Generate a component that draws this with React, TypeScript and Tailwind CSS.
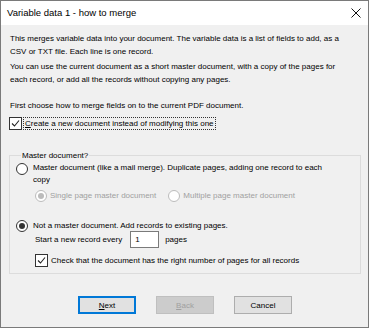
import React from 'react'

const Check = () => (
  <svg width="9" height="9" viewBox="0 0 9 9" className="block">
    <path d="M1 4.5 L3.5 7 L8 1.5" fill="none" stroke="#222" strokeWidth="1.1" />
  </svg>
)

const CheckBox = ({ checked }: { checked: boolean }) => (
  <span className="w-[13px] h-[13px] border border-[#333] bg-white flex items-center justify-center shrink-0">
    {checked && <Check />}
  </span>
)

const Radio = ({ selected, disabled }: { selected: boolean; disabled?: boolean }) => (
  <span
    className={`w-[12px] h-[12px] rounded-full border bg-white flex items-center justify-center shrink-0 ${
      disabled ? 'border-[#bcbcbc]' : 'border-[#333]'
    }`}
  >
    {selected && (
      <span className={`w-[6px] h-[6px] rounded-full ${disabled ? 'bg-[#bcbcbc]' : 'bg-[#333]'}`} />
    )}
  </span>
)

export default function App() {
  return (
    <div className="w-[369px] h-[328px] border border-[#7a7a7a] bg-[#f0f0f0] flex flex-col font-['Liberation_Sans',Arial,sans-serif] text-[8px] text-black overflow-hidden">
      <div className="h-[24px] bg-white flex items-center justify-between pl-[6px] pr-[7px] shrink-0">
        <span className="text-[9.5px]">Variable data 1 - how to merge</span>
        <svg width="10" height="10" viewBox="0 0 10 10">
          <path d="M0.5 0.5 L9.5 9.5 M9.5 0.5 L0.5 9.5" stroke="#111" strokeWidth="1" />
        </svg>
      </div>

      <div className="flex flex-col px-[9px] pt-[7px] leading-[13px]">
        <p>
          This merges variable data into your document. The variable data is a list of fields to add, as a
          <br />
          CSV or TXT file. Each line is one record.
        </p>
        <p className="mt-[2px]">
          You can use the current document as a short master document, with a copy of the pages for
          <br />
          each record, or add all the records without copying any pages.
        </p>
        <p className="mt-[13px]">First choose how to merge fields on to the current PDF document.</p>

        <div className="mt-[5px] flex items-center h-[13px] -ml-[1px]">
          <CheckBox checked />
          <span className="ml-[1px] px-[1px] border border-dotted border-[#333] leading-[11px]">
            <span className="underline">C</span>reate a new document instead of modifying this one
          </span>
        </div>

        <fieldset className="mt-[19px] -ml-[1px] w-[352px] h-[125px] border border-[#dcdcdc] pl-[6px]">
          <legend className="ml-[5px] px-[1px] leading-[13px]">Master document?</legend>

          <div className="flex items-start">
            <span className="mt-[1px]">
              <Radio selected={false} />
            </span>
            <span className="ml-[5px] w-[300px] leading-[12px]">
              Master document (like a mail merge). Duplicate pages, adding one record to each copy
            </span>
          </div>

          <div className="flex items-center mt-[3px] ml-[19px] text-[#a0a0a0] h-[13px]">
            <Radio selected disabled />
            <span className="ml-[3px]">Single page master document</span>
            <span className="ml-[12px]">
              <Radio selected={false} disabled />
            </span>
            <span className="ml-[3px]">Multiple page master document</span>
          </div>

          <div className="flex items-center mt-[17px] h-[13px]">
            <Radio selected />
            <span className="ml-[5px]">Not a master document. Add records to existing pages.</span>
          </div>

          <div className="flex items-center ml-[19px] mt-[-1px]">
            <span>Start a new record every</span>
            <span className="ml-[8px] w-[29px] h-[17px] bg-white border border-[#7a7a7a] flex items-center pl-[4px]">
              1
            </span>
            <span className="ml-[6px]">pages</span>
          </div>

          <div className="flex items-center ml-[19px] mt-[6px] h-[13px]">
            <CheckBox checked />
            <span className="ml-[3px]">Check that the document has the right number of pages for all records</span>
          </div>
        </fieldset>

        <div className="flex mt-[22px] ml-[68px] gap-[20px]">
          <button className="w-[58px] h-[18px] bg-[#e1e1e1] border-2 border-[#0078d7] flex items-center justify-center">
            <span>
              <span className="underline">N</span>ext
            </span>
          </button>
          <button className="w-[58px] h-[18px] bg-[#cccccc] border border-[#bfbfbf] text-[#a0a0a0] flex items-center justify-center">
            <span>
              <span className="underline">B</span>ack
            </span>
          </button>
          <button className="w-[58px] h-[18px] bg-[#e1e1e1] border border-[#adadad] flex items-center justify-center">
            Cancel
          </button>
        </div>
      </div>
    </div>
  )
}
